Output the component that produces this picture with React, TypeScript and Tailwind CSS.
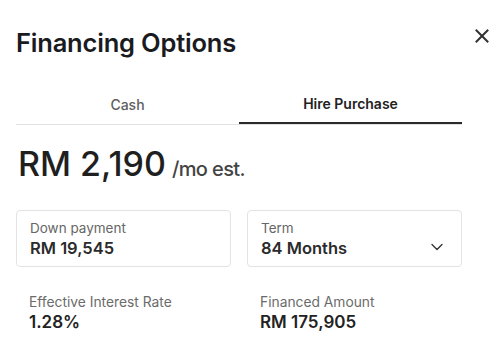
import React from "react";
import { ChevronDown } from "lucide-react";

export default function App() {
  return (
    <div className="w-[500px] h-[347px] bg-white overflow-hidden font-['Inter',sans-serif] pt-[27px]">
      <div className="flex items-start pl-4 pr-[11px]">
        <h1 className="text-[25.5px] leading-[32px] font-semibold text-[#1a1b1f] tracking-[-0.2px]">
          Financing Options
        </h1>
        <button className="ml-auto mt-[2px] w-[14px] h-[14px] text-[#333333]" aria-label="Close">
          <svg width="14" height="14" viewBox="0 0 14 14" fill="none" stroke="currentColor" strokeWidth="2" strokeLinecap="square">
            <line x1="1.5" y1="1.5" x2="12.5" y2="12.5" />
            <line x1="12.5" y1="1.5" x2="1.5" y2="12.5" />
          </svg>
        </button>
      </div>

      <div className="pl-4 w-[462px]">
        <div className="mt-[27px] flex border-b border-[#e2e2e2]">
          <div className="flex-1 h-[38px] flex items-center justify-center text-[14px] leading-5 font-medium text-[#5e5e5e]">
            Cash
          </div>
          <div className="flex-1 h-[38px] -mb-px border-b-2 border-[#2a2a2a] flex items-center justify-center text-[14px] leading-5 font-semibold text-[#222222]">
            Hire Purchase
          </div>
        </div>

        <div className="mt-[19px] flex items-baseline h-[40px]">
          <span className="text-[34px] leading-[40px] font-medium text-[#1f1f1f] pl-[2px]">RM 2,190</span>
          <span className="ml-[6px] text-[20px] leading-7 font-medium text-[#444444] tracking-[-0.6px]">/mo est.</span>
        </div>

        <div className="mt-[26px] grid grid-cols-2 gap-4">
          <div className="border border-[#e3e3e3] rounded-[4px] px-[13px] pt-[9px] pb-[7px]">
            <div className="text-[13.5px] leading-4 text-[#666666]">Down payment</div>
            <div className="mt-px text-[16.5px] leading-[22px] font-semibold text-[#2b2b2b]">RM 19,545</div>
          </div>
          <div className="border border-[#e3e3e3] rounded-[4px] pl-[13px] pr-[14px] pt-[9px] pb-[7px] flex items-center">
            <div className="flex-1">
              <div className="text-[13.5px] leading-4 text-[#666666]">Term</div>
              <div className="mt-px text-[16.5px] leading-[22px] font-semibold text-[#2b2b2b]">84 Months</div>
            </div>
            <ChevronDown size={20} strokeWidth={1.6} className="text-[#333333] mt-[14px]" />
          </div>
        </div>

        <div className="mt-[27px] grid grid-cols-2 gap-4">
          <div className="px-[13px]">
            <div className="text-[13.8px] leading-4 text-[#6b6b6b]">Effective Interest Rate</div>
            <div className="mt-px text-[17px] leading-[22px] font-semibold text-[#222222]">1.28%</div>
          </div>
          <div className="px-[13px]">
            <div className="text-[13.8px] leading-4 text-[#6b6b6b]">Financed Amount</div>
            <div className="mt-px text-[17px] leading-[22px] font-semibold text-[#222222]">RM 175,905</div>
          </div>
        </div>
      </div>
    </div>
  );
}
